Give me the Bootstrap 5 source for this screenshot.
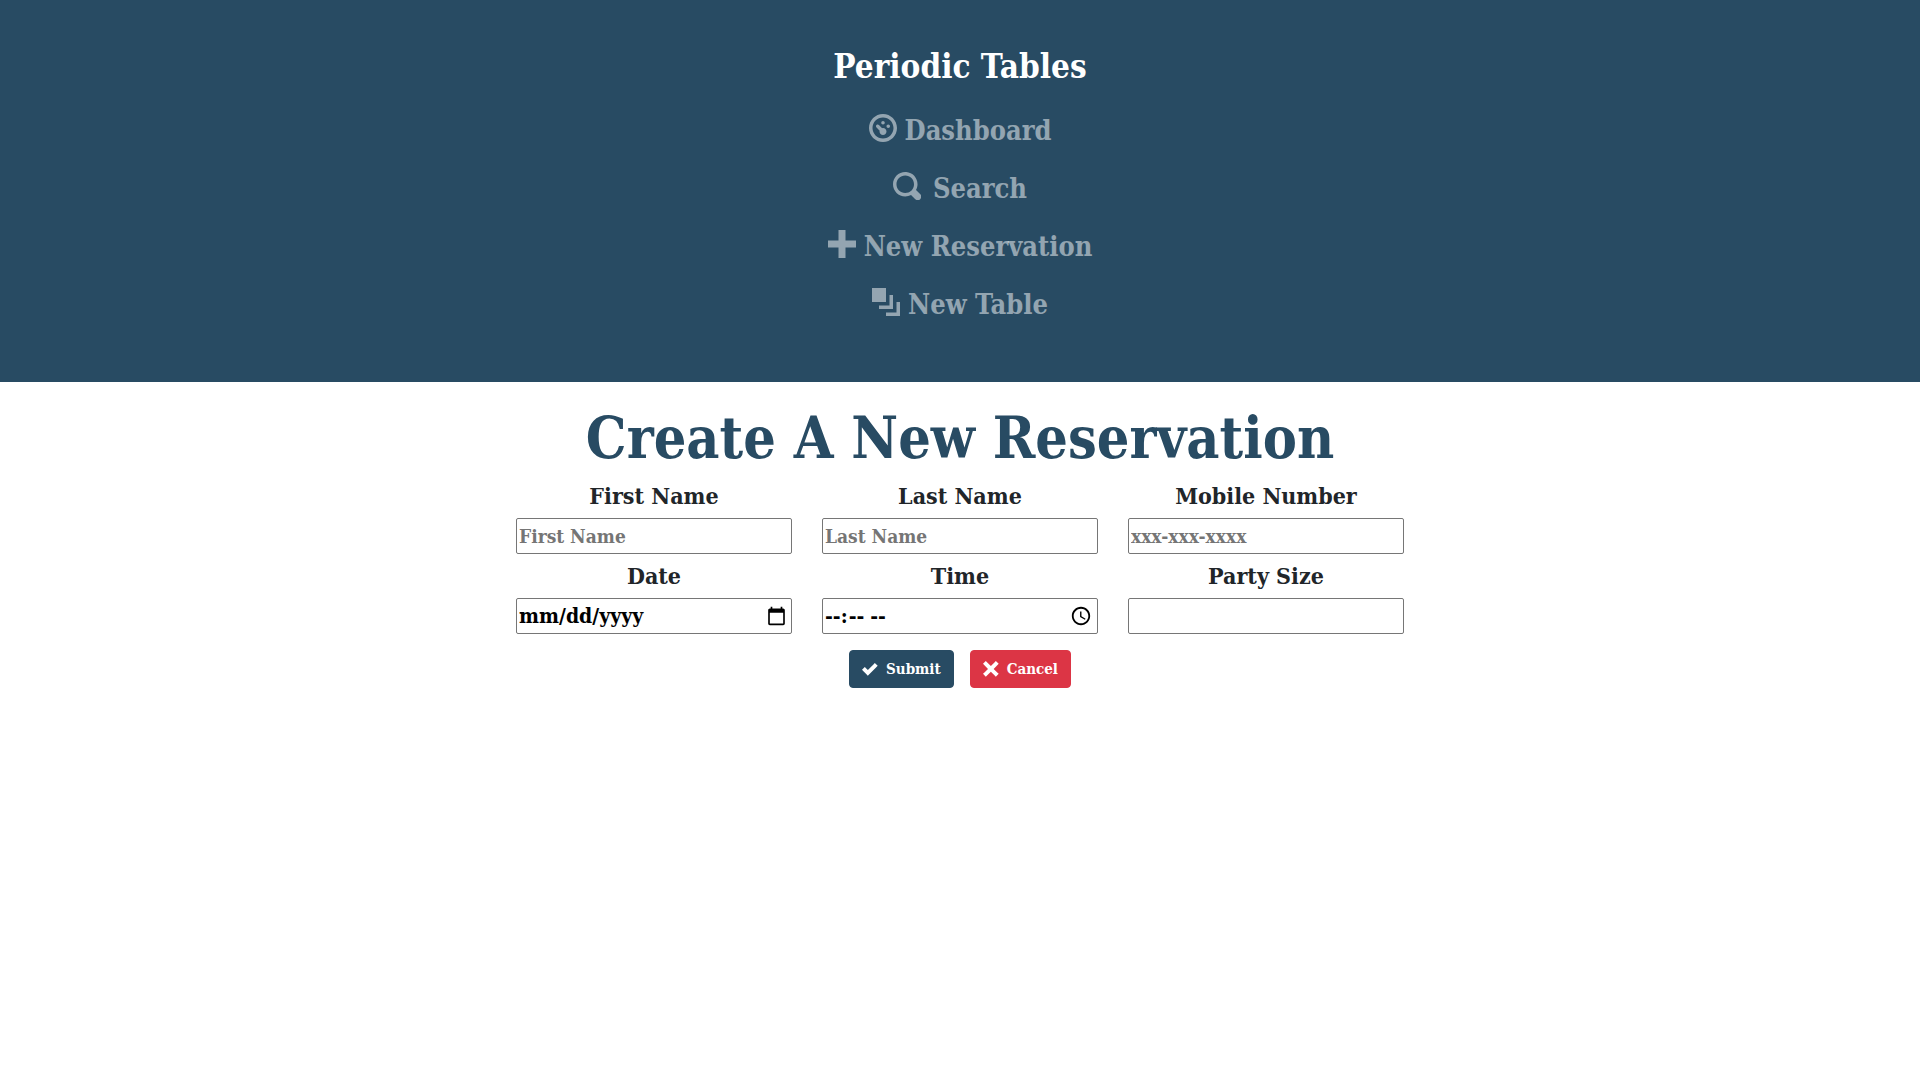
<!DOCTYPE html>
<html lang="en">
<head>
<meta charset="utf-8">
<meta name="viewport" content="width=device-width, initial-scale=1">
<title>Periodic Tables</title>
<link href="https://cdn.jsdelivr.net/npm/bootstrap@5.3.0/dist/css/bootstrap.min.css" rel="stylesheet">
<style>
  body, input, button { font-family: "Roboto Slab", "DejaVu Serif Condensed", "DejaVu Serif", serif; font-weight: 700; }
  body { background: #fff; color: #212529; }
  .site-header { background: #284b63; padding: 40px 16px 48px; }
  .site-brand { font-size: 33px; line-height: 54px; color: #fff; }
  .site-links .nav-link { font-size: 27px; line-height: 42px; padding: 8px; color: rgba(255,255,255,.5); }
  .site-links .nav-link:hover { color: rgba(255,255,255,.75); }
  .site-links svg { width: 28px; height: 28px; margin-bottom: 6px; }
  .page-title { font-size: 57px; line-height: 72px; font-weight: 700; color: #284b63; }
  .form-wrap { max-width: 888px; }
  .form-grid { --bs-gutter-x: 30px; }
  .field-label { display: block; font-size: 23px; line-height: 36px; }
  .field-box { display: block; width: 100%; height: 36px; padding: 1px 2px; font-size: 19px; color: #000; background: #fff; border: 1px solid #767676; border-radius: 2px; }
  .field-box[type="date"], .field-box[type="time"] { font-size: 21px; }
  .field-box::placeholder { color: #757575; opacity: 1; }
  .form-btn { font-size: 15px; line-height: 24px; font-weight: 700; border-radius: 4px; }
  .form-btn svg { width: 16px; height: 16px; }
  .btn-navy { --bs-btn-color: #fff; --bs-btn-bg: #284b63; --bs-btn-border-color: #284b63; --bs-btn-hover-color: #fff; --bs-btn-hover-bg: #1e3a4d; }
</style>
</head>
<body>
<header class="site-header">
  <nav class="d-flex flex-column align-items-center" aria-label="Main">
    <a class="site-brand text-decoration-none" href="#">Periodic Tables</a>
    <ul class="site-links nav flex-column align-items-center mt-2">
      <li class="nav-item"><a class="nav-link d-flex align-items-center gap-2" href="#"><svg viewBox="0 0 8 8" fill="currentColor" aria-hidden="true"><path d="M4 0c-2.2 0-4 1.8-4 4s1.8 4 4 4 4-1.8 4-4-1.8-4-4-4zm0 1c1.66 0 3 1.34 3 3s-1.34 3-3 3-3-1.34-3-3 1.34-3 3-3zm0 1c-.28 0-.5.22-.5.5s.22.5.5.5.5-.22.5-.5-.22-.5-.5-.5zm-1.66 1a.5.5 0 0 0-.19.84l.91.91c-.02.08-.06.16-.06.25 0 .55.45 1 1 1s1-.45 1-1-.45-1-1-1c-.09 0-.17.04-.25.06l-.91-.91a.5.5 0 0 0-.44-.16.5.5 0 0 0-.06 0zm3.16 0c-.28 0-.5.22-.5.5s.22.5.5.5.5-.22.5-.5-.22-.5-.5-.5z"/></svg>Dashboard</a></li>
      <li class="nav-item"><a class="nav-link d-flex align-items-center gap-2" href="#"><svg class="me-1" viewBox="0 0 8 8" fill="currentColor" aria-hidden="true"><path d="M3.5 0c-1.93 0-3.5 1.57-3.5 3.5s1.57 3.5 3.5 3.5c.59 0 1.17-.14 1.66-.41a1 1 0 0 0 .13.13l1 1a1.02 1.02 0 1 0 1.44-1.44l-1-1a1 1 0 0 0-.16-.13c.27-.49.44-1.06.44-1.66 0-1.93-1.55-3.5-3.5-3.5zm0 1c1.39 0 2.5 1.11 2.5 2.5 0 .66-.24 1.27-.66 1.72l-.03.03a1 1 0 0 0-.13.13c-.44.4-1.04.63-1.69.63-1.39 0-2.5-1.11-2.5-2.5s1.11-2.5 2.5-2.5z"/></svg>Search</a></li>
      <li class="nav-item"><a class="nav-link d-flex align-items-center gap-2" href="#"><svg viewBox="0 0 8 8" fill="currentColor" aria-hidden="true"><path d="M3 0v3h-3v2h3v3h2v-3h3v-2h-3v-3h-2z"/></svg>New Reservation</a></li>
      <li class="nav-item"><a class="nav-link d-flex align-items-center gap-2" href="#"><svg viewBox="0 0 8 8" fill="currentColor" aria-hidden="true"><path d="M0 0v4h4v-4h-4zm5 2v3h-3v1h4v-4h-1zm2 2v3h-3v1h4v-4h-1z"/></svg>New Table</a></li>
    </ul>
  </nav>
</header>
<main class="text-center px-3">
  <h1 class="page-title mt-3 pt-1 mb-0">Create A New Reservation</h1>
  <form class="form-wrap mx-auto">
    <div class="row row-cols-1 row-cols-md-3 form-grid">
      <div class="col"><label class="field-label pt-1 mb-1" for="first">First Name</label><input class="field-box" id="first" type="text" placeholder="First Name"></div>
      <div class="col"><label class="field-label pt-1 mb-1" for="last">Last Name</label><input class="field-box" id="last" type="text" placeholder="Last Name"></div>
      <div class="col"><label class="field-label pt-1 mb-1" for="mobile">Mobile Number</label><input class="field-box" id="mobile" type="tel" placeholder="xxx-xxx-xxxx"></div>
      <div class="col"><label class="field-label pt-1 mb-1" for="date">Date</label><input class="field-box" id="date" type="date"></div>
      <div class="col"><label class="field-label pt-1 mb-1" for="time">Time</label><input class="field-box" id="time" type="time"></div>
      <div class="col"><label class="field-label pt-1 mb-1" for="party">Party Size</label><input class="field-box" id="party" type="number" min="1"></div>
    </div>
    <div class="d-flex justify-content-center gap-3 mt-3">
      <button class="btn btn-navy form-btn d-flex align-items-center gap-2" type="submit"><svg viewBox="0 0 8 8" fill="currentColor" aria-hidden="true"><path d="M6.41 1l-.69.72-2.78 2.78-.81-.78-.72-.72-1.41 1.41.72.72 1.5 1.5.69.72.72-.72 3.5-3.5.72-.72-1.44-1.41z"/></svg>Submit</button>
      <button class="btn btn-danger form-btn d-flex align-items-center gap-2" type="button"><svg viewBox="0 0 8 8" fill="currentColor" aria-hidden="true"><path d="M1.41 0l-1.41 1.41.72.72 1.78 1.81-1.78 1.78-.72.69 1.41 1.44.72-.72 1.81-1.81 1.78 1.81.69.72 1.44-1.44-.72-.69-1.81-1.78 1.81-1.81.72-.72-1.44-1.41-.69.72-1.78 1.78-1.81-1.78-.72-.72z"/></svg>Cancel</button>
    </div>
  </form>
</main>
<script src="https://cdn.jsdelivr.net/npm/bootstrap@5.3.0/dist/js/bootstrap.bundle.min.js"></script>
</body>
</html>
